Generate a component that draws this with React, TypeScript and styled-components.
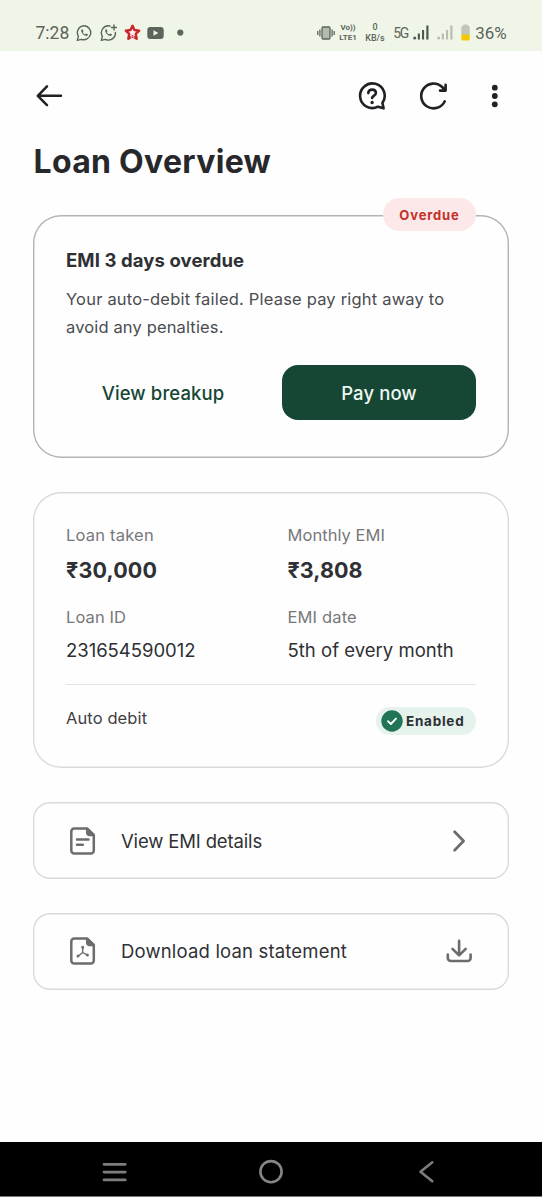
import React from 'react';
import styled, { createGlobalStyle } from 'styled-components';

const GlobalStyle = createGlobalStyle`
  * { box-sizing: border-box; }
  body { margin: 0; background: #fff; }
  svg { display: block; flex: none; }
  button { border: 0; background: none; padding: 0; font: inherit; color: inherit; }
`;

const Screen = styled.div`
  width: 542px;
  height: 1200px;
  display: flex;
  flex-direction: column;
  background: #fefefe;
  color: #2f3034;
  font-family: Inter, 'Noto Sans', sans-serif;
  overflow: hidden;
`;

const StatusBar = styled.header`
  height: 51px;
  flex: none;
  display: flex;
  align-items: center;
  justify-content: space-between;
  padding: 14px 35px 0 35.5px;
  background: #f0f6e7;
  color: #5c645b;
  font-family: Roboto, sans-serif;
`;

const StatusGroup = styled.div<{ $gap?: number }>`
  display: flex;
  align-items: center;
  height: 37px;
  gap: ${(p) => p.$gap ?? 0}px;
`;

const StatusCell = styled.div<{ $width: number; $before: number }>`
  display: flex;
  justify-content: center;
  width: ${(p) => p.$width}px;
  margin-left: ${(p) => p.$before}px;
`;

const StatusText = styled.span<{ $size: number; $spacing?: number }>`
  font-size: ${(p) => p.$size}px;
  letter-spacing: ${(p) => p.$spacing ?? 0}px;
  line-height: 20px;
  white-space: nowrap;
`;

const TinyStack = styled.span<{ $size: number; $line: number; $weight: number }>`
  display: flex;
  flex-direction: column;
  align-items: center;
  font-size: ${(p) => p.$size}px;
  font-weight: ${(p) => p.$weight};
  line-height: ${(p) => p.$line}px;
  white-space: nowrap;
`;

const AppBar = styled.div`
  height: 90px;
  flex: none;
  display: flex;
  align-items: center;
  justify-content: space-between;
  padding: 0 32px 0 33px;
  color: #202124;
`;

const Actions = styled.div`
  display: flex;
  align-items: center;
  gap: 31px;
`;

const Title = styled.h1`
  margin: 1px 0 33px;
  padding: 0 33.5px;
  font-size: 32px;
  font-weight: 700;
  line-height: 40px;
  letter-spacing: 0.3px;
  color: #27282b;
  white-space: nowrap;
`;

const Content = styled.main`
  flex: 1;
  display: flex;
  flex-direction: column;
  padding: 0 33px;
  gap: 34px;
`;

const ActionList = styled.div`
  display: flex;
  flex-direction: column;
  gap: 33.5px;
`;

const Card = styled.section<{ $strong?: boolean; $height: number }>`
  position: relative;
  height: ${(p) => p.$height}px;
  padding: 1px 33px;
  box-shadow: inset 0 0 0 1.4px ${(p) => (p.$strong ? '#b3b4b6' : '#d9dadb')};
  border-radius: 28px;
  display: flex;
  flex-direction: column;
`;

const OverdueBadge = styled.span`
  position: absolute;
  top: -17px;
  right: 33px;
  width: 93px;
  height: 33px;
  border-radius: 17px;
  background: #fce8e8;
  color: #c4302b;
  font-size: 13px;
  font-weight: 700;
  line-height: 34px;
  letter-spacing: 0.85px;
  text-align: center;
`;

const CardHeading = styled.h2`
  margin: 30px 0 12px;
  font-size: 18.5px;
  font-weight: 650;
  line-height: 28px;
  letter-spacing: 0.1px;
`;

const Message = styled.p<{ $spacing: number }>`
  margin: 0;
  font-size: 16.5px;
  line-height: 27.5px;
  letter-spacing: ${(p) => p.$spacing}px;
  color: #4b4c50;
  white-space: nowrap;
`;

const ButtonRow = styled.div`
  display: grid;
  grid-template-columns: 194px 194px;
  justify-content: space-between;
  margin-top: 23.5px;
`;

const Button = styled.button<{ $primary?: boolean }>`
  height: 55px;
  padding-top: 1px;
  border-radius: 16px;
  background: ${(p) => (p.$primary ? '#154734' : 'transparent')};
  color: ${(p) => (p.$primary ? '#eef6f1' : '#154734')};
  font-size: 18.5px;
  font-weight: 530;
  letter-spacing: 0.1px;
  white-space: nowrap;
`;

const Details = styled.dl`
  display: grid;
  grid-template-columns: 221.5px 1fr;
  margin: 30px 0 0;
  padding-bottom: 21px;
  border-bottom: 1px solid #e3e3e4;
  row-gap: 21.5px;
`;

const Label = styled.dt<{ $spacing?: number }>`
  font-size: 16.5px;
  line-height: 24px;
  letter-spacing: ${(p) => p.$spacing ?? 0}px;
  color: #77787b;
`;

const Value = styled.dd<{ $bold?: boolean; $spacing?: number }>`
  margin: ${(p) => (p.$bold ? 10 : 8.5)}px 0 0;
  font-size: ${(p) => (p.$bold ? 21.5 : 18.5)}px;
  font-weight: ${(p) => (p.$bold ? 650 : 400)};
  line-height: 26px;
  letter-spacing: ${(p) => p.$spacing ?? 0}px;
  white-space: nowrap;
`;

const AutoDebit = styled.div`
  display: flex;
  justify-content: space-between;
  align-items: flex-start;
  margin-top: 22px;
  font-size: 16.5px;
  line-height: 22px;
  letter-spacing: 0.1px;
  color: #3f4044;
`;

const EnabledChip = styled.span`
  display: flex;
  align-items: center;
  gap: 3px;
  width: 100px;
  height: 28px;
  padding-left: 5px;
  border-radius: 14px;
  background: #e6f2ec;
  color: #2f3034;
  font-size: 13.5px;
  font-weight: 650;
  letter-spacing: 0.75px;
`;

const ActionRow = styled.button<{ $spacing?: number }>`
  height: 77px;
  flex: none;
  display: grid;
  grid-template-columns: 28px 1fr 28px;
  align-items: center;
  column-gap: 25px;
  padding: 0 36px 0 35px;
  box-shadow: inset 0 0 0 1.4px #d9dadb;
  border-radius: 17px;
  font-size: 18.5px;
  letter-spacing: ${(p) => p.$spacing ?? 0}px;
  text-align: left;
  white-space: nowrap;
  color: #303135;
`;

const NavBar = styled.nav`
  height: 55px;
  flex: none;
  display: flex;
  align-items: center;
  justify-content: space-between;
  margin-bottom: 3px;
  padding: 5px 102px 0;
  background: #000;
  border-bottom: 1px solid #777;
`;

const ChatGlyph = ({ plus }: { plus?: boolean }) => (
  <svg width="17" height="18" viewBox="0 0 17 18" fill="none" stroke="currentColor" strokeWidth="1.4" strokeLinejoin="round" strokeLinecap="round">
    {plus ? (
      <path d="M10 2A7 7 0 0 0 2.4 12.4L1.3 16.4L5.3 15.3A7 7 0 0 0 15.4 8.4M14 1V6M11.5 3.5H16.5" />
    ) : (
      <path d="M8.7 1.8A7 7 0 0 0 2.4 12.4L1.3 16.4L5.3 15.3A7 7 0 1 0 8.7 1.8Z" />
    )}
    <path d="M5.9 5.2C4.6 6.2 5.2 8.3 7 10.2C8.9 12 11.2 12.5 12 11.1L11.8 10.3L10.1 9.6L9.2 10.5C8.1 10 7.2 9 6.8 8.2L7.5 7.3L6.8 5.4Z" fill="currentColor" stroke="none" />
  </svg>
);

const FileGlyph = ({ children }: { children: React.ReactNode }) => (
  <svg width="28" height="30" viewBox="0 0 28 30" fill="none" stroke="#6b6c6f" strokeWidth="2.5" strokeLinecap="round" strokeLinejoin="round">
    <path d="M19.2 2.6H6.3A3 3 0 0 0 3.3 5.6V24.6A3 3 0 0 0 6.3 27.6H22.8A3 3 0 0 0 25.8 24.6V9Z" />
    <path d="M19.2 2.8V6.8A2.2 2.2 0 0 0 21.4 9H25.5Z" fill="#6b6c6f" />
    {children}
  </svg>
);

const Bars = ({ color }: { color: string }) => (
  <svg width="16" height="15" viewBox="0 0 16 15" fill={color}>
    <circle cx="1.7" cy="13.1" r="1.5" />
    <rect x="4.8" y="8.5" width="2.1" height="6" />
    <rect x="9" y="5" width="2.1" height="9.5" />
    <rect x="13.3" y="0.5" width="2.2" height="14" />
  </svg>
);

export default function App() {
  return (
    <Screen>
      <GlobalStyle />
      <StatusBar>
        <StatusGroup $gap={6.8}>
          <StatusText $size={17.5}>7:28</StatusText>
          <ChatGlyph />
          <ChatGlyph plus />
          <svg width="17" height="17" viewBox="0 0 17 17">
            <path d="M8.5 1.8L10.5 6L15.2 6.6L11.8 9.9L12.7 14.7L8.5 12.4L4.3 14.7L5.2 9.9L1.8 6.6L6.5 6Z" fill="#fbeeea" stroke="#c9252d" strokeWidth="2.4" strokeLinejoin="round" />
            <path d="M7.2 10.5V15.5M9.8 10.5V15.5M7.2 12.8H9.8" stroke="#f6c9c8" strokeWidth="0.8" />
          </svg>
          <svg width="17" height="14" viewBox="0 0 17 14">
            <rect x="0.3" y="1" width="16.4" height="12" rx="3" fill="#5c645b" />
            <path d="M6.5 4.2V9.8L11.3 7Z" fill="#f0f6e7" />
          </svg>
          <svg width="16" height="8" viewBox="0 0 16 8">
            <circle cx="9.3" cy="3.6" r="3.1" fill="#5c645b" />
          </svg>
        </StatusGroup>
        <StatusGroup>
          <StatusCell $width={18} $before={0}>
            <svg width="18" height="14" viewBox="0 0 18 14" fill="none" stroke="#5c645b" strokeWidth="1.3">
              <rect x="5" y="1" width="8" height="12" rx="1" fill="#b4bab0" />
              <path d="M2.9 3.5V10.5M0.8 5V9M15.1 3.5V10.5M17.2 5V9" />
            </svg>
          </StatusCell>
          <StatusCell $width={19} $before={4}>
            <TinyStack $size={8} $line={10} $weight={700}>
              <span>Vo))</span>
              <span>LTE1</span>
            </TinyStack>
          </StatusCell>
          <StatusCell $width={20} $before={7.5}>
            <TinyStack $size={9} $line={11} $weight={500}>
              <span>0</span>
              <span>KB/s</span>
            </TinyStack>
          </StatusCell>
          <StatusCell $width={15} $before={8}>
            <StatusText $size={14} $spacing={-1.4}>5G</StatusText>
          </StatusCell>
          <StatusCell $width={16} $before={5}>
            <Bars color="#4f574e" />
          </StatusCell>
          <StatusCell $width={16} $before={8}>
            <Bars color="#b7beb1" />
          </StatusCell>
          <StatusCell $width={9} $before={8}>
            <svg width="9" height="17" viewBox="0 0 9 17">
              <path d="M2.5 1.5V0.5H6.5V1.5A2 2 0 0 1 8.7 3.5V11H0.3V3.5A2 2 0 0 1 2.5 1.5Z" fill="#bfc5b9" />
              <path d="M0.3 10.5H8.7V15A1.5 1.5 0 0 1 7.2 16.5H1.8A1.5 1.5 0 0 1 0.3 15Z" fill="#f6c700" />
            </svg>
          </StatusCell>
          <StatusCell $width={32} $before={5}>
            <StatusText $size={17} $spacing={-0.1}>36%</StatusText>
          </StatusCell>
        </StatusGroup>
      </StatusBar>

      <AppBar>
        <svg width="32" height="28" viewBox="0 0 32 28" fill="none" stroke="currentColor" strokeWidth="2.5" strokeLinecap="round" strokeLinejoin="round">
          <path d="M28 13.8H5M14 4.4L4.8 13.8L14 23.2" />
        </svg>
        <Actions>
          <svg width="30" height="30" viewBox="0 0 30 30" fill="none" stroke="currentColor" strokeWidth="2.6" strokeLinecap="round" strokeLinejoin="round">
            <g transform="translate(-0.6 0)">
              <path d="M25 21.9A12.3 12.3 0 1 0 20.6 25.7L26.2 27.3L25 21.9Z" />
              <path d="M10.9 12.1C10.9 9.9 12.5 8.6 14.7 8.6C16.9 8.6 18.5 10 18.5 12C18.5 14.7 14.7 14.9 14.7 17" />
              <circle cx="14.7" cy="21.5" r="1" fill="currentColor" strokeWidth="1.4" />
            </g>
          </svg>
          <svg width="30" height="30" viewBox="0 0 30 30" fill="none" stroke="currentColor" strokeWidth="2.6" strokeLinecap="round" strokeLinejoin="round">
            <path d="M25.8 20.3A12.4 12.4 0 1 1 23.2 6L26 9" />
            <path d="M26.6 3.8V9.6H21" />
            <path d="M26.4 6.6V9.6H23.4Z" fill="currentColor" strokeWidth="1" />
          </svg>
          <svg width="30" height="30" viewBox="0 0 30 30" fill="currentColor">
            <circle cx="14.8" cy="6.7" r="2.9" />
            <circle cx="14.8" cy="15" r="2.9" />
            <circle cx="14.8" cy="23.3" r="2.9" />
          </svg>
        </Actions>
      </AppBar>

      <Title>Loan Overview</Title>

      <Content>
        <Card $strong $height={243}>
          <OverdueBadge>Overdue</OverdueBadge>
          <CardHeading>EMI 3 days overdue</CardHeading>
          <Message $spacing={0.19}>Your auto-debit failed. Please pay right away to</Message>
          <Message $spacing={0.14}>avoid any penalties.</Message>
          <ButtonRow>
            <Button>View breakup</Button>
            <Button $primary>Pay now</Button>
          </ButtonRow>
        </Card>

        <Card $height={276}>
          <Details>
            <div>
              <Label $spacing={0.2}>Loan taken</Label>
              <Value $bold $spacing={0.15}>₹30,000</Value>
            </div>
            <div>
              <Label $spacing={0.05}>Monthly EMI</Label>
              <Value $bold $spacing={0.05}>₹3,808</Value>
            </div>
            <div>
              <Label $spacing={0.1}>Loan ID</Label>
              <Value $spacing={-0.03}>231654590012</Value>
            </div>
            <div>
              <Label $spacing={0.15}>EMI date</Label>
              <Value $spacing={0.02}>5th of every month</Value>
            </div>
          </Details>
          <AutoDebit>
            <span>Auto debit</span>
            <EnabledChip>
              <svg width="22" height="22" viewBox="0 0 22 22" fill="none">
                <circle cx="11" cy="11" r="10.7" fill="#217455" />
                <path d="M7 11.2L9.9 14L15 8.6" stroke="#fff" strokeWidth="1.9" strokeLinecap="round" strokeLinejoin="round" />
              </svg>
              Enabled
            </EnabledChip>
          </AutoDebit>
        </Card>

        <ActionList>
          <ActionRow $spacing={-0.15}>
            <FileGlyph>
              <path d="M9 13.6H20.5M9 18.8H14.8" />
            </FileGlyph>
            <span>View EMI details</span>
            <svg width="28" height="28" viewBox="0 0 28 28" fill="none" stroke="#6b6c6f" strokeWidth="2.7" strokeLinecap="round" strokeLinejoin="round">
              <path d="M9.6 4.8L18.6 14L9.6 23.2" />
            </svg>
          </ActionRow>

          <ActionRow $spacing={0.17}>
            <FileGlyph>
              <g strokeWidth="1.4">
                <path d="M14.7 12V16.5L10.6 19.8M14.7 16.5L19 18.8" />
                <circle cx="14.7" cy="11.3" r="0.8" />
                <circle cx="10" cy="20" r="0.8" />
                <circle cx="19.4" cy="19" r="0.8" />
              </g>
            </FileGlyph>
            <span>Download loan statement</span>
            <svg width="28" height="28" viewBox="0 0 28 28" fill="none" stroke="#6b6c6f" strokeWidth="2.6" strokeLinecap="round" strokeLinejoin="round">
              <path d="M14.1 3.9V18M7.5 11.9L14.1 18.4L20.7 11.9M2.8 17.6V21A3 3 0 0 0 5.8 24H22.6A3 3 0 0 0 25.6 21V17.6" />
            </svg>
          </ActionRow>
        </ActionList>
      </Content>

      <NavBar>
        <svg width="26" height="26" viewBox="0 0 26 26" stroke="#7d7d7d" strokeWidth="2.8" strokeLinecap="round">
          <path d="M2 5.3H23.2M2 13.1H23.2M2 20.9H23.2" />
        </svg>
        <svg width="26" height="26" viewBox="0 0 26 26" fill="none" stroke="#858585" strokeWidth="2.6">
          <circle cx="13" cy="12.7" r="10.6" />
        </svg>
        <svg width="26" height="26" viewBox="0 0 26 26" fill="none" stroke="#7d7d7d" strokeWidth="2.6" strokeLinecap="round" strokeLinejoin="round">
          <path d="M18.3 3.3L6.5 12.7L18.3 22.2" />
        </svg>
      </NavBar>
    </Screen>
  );
}
